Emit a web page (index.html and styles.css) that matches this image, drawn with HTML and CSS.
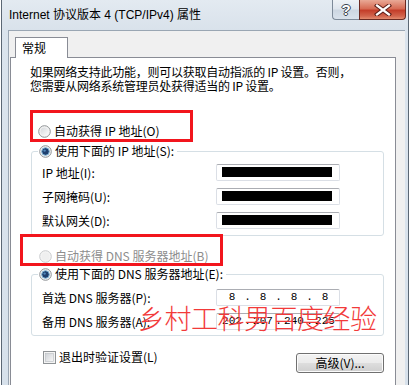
FILE: index.html
```html
<!DOCTYPE html>
<html lang="zh-CN">
<head>
<meta charset="utf-8">
<title>Internet 协议版本 4 (TCP/IPv4) 属性</title>
<link rel="stylesheet" href="styles.css">
</head>
<body>
<div class="window">
  <div class="titlebar">
    <span class="title">Internet 协议版本 4 (TCP/IPv4) 属性</span>
    <div class="caption-btns">
      <span class="cbtn help">?</span>
      <span class="cbtn close">
        <svg width="20" height="12" viewBox="0 0 20 12"><path d="M4 1.5 L16 10.5 M16 1.5 L4 10.5" stroke="#5a1d17" stroke-width="4.2" stroke-linecap="square"/><path d="M4 1.5 L16 10.5 M16 1.5 L4 10.5" stroke="#ffffff" stroke-width="2.2" stroke-linecap="square"/></svg>
      </span>
    </div>
  </div>
  <div class="client">
    <div class="tabs"><span class="tab">常规</span></div>
    <div class="panel">
      <p class="desc">如果网络支持此功能，则可以获取自动指派的 IP 设置。否则，<br>您需要从网络系统管理员处获得适当的 IP 设置。</p>
      <div class="mark mark1">
        <div class="opt">
          <svg class="radio" width="13" height="13" viewBox="0 0 13 13"><defs><linearGradient id="ro" x1="0" y1="0" x2="1" y2="1"><stop offset="0" stop-color="#d5d8dc"/><stop offset="1" stop-color="#fbfbfb"/></linearGradient></defs><circle cx="6.5" cy="6.5" r="5.8" fill="#f4f4f4" stroke="#8f9396"/><circle cx="6.5" cy="6.5" r="4" fill="url(#ro)"/></svg>
          <span>自动获得 IP 地址(O)</span>
        </div>
      </div>
      <div class="group g1">
        <div class="legend opt">
          <svg class="radio" width="13" height="13" viewBox="0 0 13 13"><circle cx="6.5" cy="6.5" r="5.8" fill="#f4f4f4" stroke="#8f9396"/><circle cx="6.5" cy="6.5" r="3.8" fill="#1f3f6e" stroke="#7cb3d6" stroke-width="1"/><circle cx="5.6" cy="5.6" r="1.2" fill="#4f86b8"/></svg>
          <span>使用下面的 IP 地址(S):</span>
        </div>
        <div class="field"><span class="lbl">IP 地址(I):</span><span class="input"><i class="redact"></i></span></div>
        <div class="field"><span class="lbl">子网掩码(U):</span><span class="input"><i class="redact"></i></span></div>
        <div class="field"><span class="lbl">默认网关(D):</span><span class="input"><i class="redact"></i></span></div>
      </div>
      <div class="opt dns-auto disabled">
        <svg class="radio" width="13" height="13" viewBox="0 0 13 13"><circle cx="6.5" cy="6.5" r="5.8" fill="#f4f4f4" stroke="#c9cbcd"/><circle cx="6.5" cy="6.5" r="4" fill="#efefef"/></svg>
        <span>自动获得 DNS 服务器地址(B)</span>
      </div>
      <div class="group g2">
        <div class="legend opt">
          <svg class="radio" width="13" height="13" viewBox="0 0 13 13"><circle cx="6.5" cy="6.5" r="5.8" fill="#f4f4f4" stroke="#8f9396"/><circle cx="6.5" cy="6.5" r="3.8" fill="#1f3f6e" stroke="#7cb3d6" stroke-width="1"/><circle cx="5.6" cy="5.6" r="1.2" fill="#4f86b8"/></svg>
          <span>使用下面的 DNS 服务器地址(E):</span>
        </div>
        <div class="field"><span class="lbl">首选 DNS 服务器(P):</span><span class="input ip"><span class="oct">8</span><span class="dot">.</span><span class="oct">8</span><span class="dot">.</span><span class="oct">8</span><span class="dot">.</span><span class="oct">8</span></span></div>
        <div class="field"><span class="lbl">备用 DNS 服务器(A):</span><span class="input ip"><span class="oct">202</span><span class="dot">.</span><span class="oct">207</span><span class="dot">.</span><span class="oct">240</span><span class="dot">.</span><span class="oct">225</span></span></div>
      </div>
      <div class="bottom-row">
        <div class="opt check-opt">
          <svg class="check" width="13" height="13" viewBox="0 0 13 13"><defs><linearGradient id="cb" x1="0" y1="0" x2="1" y2="1"><stop offset="0" stop-color="#cfd3d8"/><stop offset="1" stop-color="#f7f7f7"/></linearGradient></defs><rect x="0.5" y="0.5" width="12" height="12" fill="#f4f4f4" stroke="#8f9396"/><rect x="2.5" y="2.5" width="8" height="8" fill="url(#cb)" stroke="#b8bcc1" stroke-width="0.6"/></svg>
          <span>退出时验证设置(L)</span>
        </div>
        <span class="btn">高级(V)...</span>
      </div>
      <div class="mark mark2"></div>
    </div>
  </div>
  <div class="watermark">乡村工科男百度经验</div>
</div>
</body>
</html>
```

FILE: styles.css
```css
html, body {
  margin: 0;
  padding: 0;
  background: #ffffff;
}
body {
  width: 413px;
  height: 385px;
  overflow: hidden;
  font-family: "Noto Sans CJK SC", "Liberation Sans", sans-serif;
  font-size: 12px;
  color: #000;
}
.window {
  position: relative;
  margin-left: 1px;
  width: 408px;
  height: 385px;
  box-sizing: border-box;
  border-left: 1px solid #5b6774;
  border-right: 1px solid #5b6774;
  background: linear-gradient(to bottom, #dbe4ed 0%, #d7e1eb 100%);
  display: flex;
  flex-direction: column;
}
.titlebar {
  height: 30px;
  flex: none;
  display: flex;
  align-items: flex-start;
  padding-left: 7px;
  background: linear-gradient(to bottom, #e3eaf1 0%, #d9e2eb 100%);
}
.title {
  font-family: "Liberation Sans", "Noto Sans CJK SC", sans-serif;
  font-size: 12px;
  line-height: 30px;
  color: #000;
}
.caption-btns {
  margin-left: auto;
  margin-right: 2px;
  display: flex;
}
.cbtn {
  height: 20px;
  box-sizing: border-box;
  display: flex;
  align-items: center;
  justify-content: center;
}
.help {
  width: 27px;
  border: 1px solid #7d8a99;
  border-top: none;
  border-right: none;
  border-radius: 0 0 0 4px;
  background: linear-gradient(to bottom, #eef2f6 0%, #dfe6ee 45%, #cdd7e2 55%, #d9e2ec 100%);
  font-family: "Liberation Sans", sans-serif;
  font-weight: bold;
  font-size: 15px;
  color: #fff;
  text-shadow: 0 0 1px #3c4650, 1px 0 0 #3c4650, -1px 0 0 #3c4650, 0 1px 0 #3c4650, 0 -1px 0 #3c4650;
}
.close {
  width: 47px;
  border: 1px solid #6b2a22;
  border-top: none;
  border-radius: 0 0 4px 0;
  background: linear-gradient(to bottom, #e9a996 0%, #d76c55 45%, #c43e2a 55%, #d2654d 85%, #e48c70 100%);
}
.client {
  flex: 1;
  margin: 0 3px 0 6px;
  border-top: 1px solid #9aa6b3;
  border-left: 1px solid #9aa6b3;
  background: #f0f0f0;
  padding-top: 6px;
}
.tabs {
  display: flex;
  padding-left: 6px;
}
.tab {
  position: relative;
  z-index: 1;
  width: 53px;
  height: 21px;
  box-sizing: border-box;
  border: 1px solid #898c95;
  border-bottom: none;
  background: #fff;
  margin-bottom: -1px;
  padding-left: 6px;
  line-height: 19px;
}
.panel {
  position: relative;
  margin-left: 1px;
  width: 386px;
  height: 340px;
  box-sizing: border-box;
  border: 1px solid #898c95;
  border-bottom: none;
  background: #fff;
}
.desc {
  margin: 7px 0 0 19px;
  line-height: 14px;
  letter-spacing: -0.25px;
  white-space: nowrap;
}
.opt {
  display: flex;
  align-items: center;
  height: 14px;
  line-height: 14px;
  white-space: nowrap;
}
.radio, .check {
  flex: none;
  margin-right: 3px;
}
.mark {
  box-sizing: border-box;
  border: 3px solid #f2151d;
}
.mark1 {
  margin: 17px 0 0 19px;
  width: 163px;
  height: 32px;
  padding: 11px 0 0 5px;
}
.mark2 {
  position: absolute;
  left: 9px;
  top: 176px;
  width: 203px;
  height: 32px;
}
.group {
  margin-left: 20px;
  width: 353px;
  box-sizing: border-box;
  border: 1px solid #d5dfe5;
  border-radius: 3px;
}
.g1 {
  margin-top: 9px;
  height: 85px;
}
.g2 {
  margin-top: 11px;
  height: 62px;
}
.legend {
  width: max-content;
  margin: -8px 0 0 6px;
  padding: 0 3px 0 1px;
  background: #fff;
}
.g1 .legend + .field {
  margin-top: 2px;
}
.g2 .legend + .field {
  margin-top: 4px;
}
.field {
  display: flex;
  align-items: center;
  height: 24px;
}
.lbl {
  width: 174px;
  padding-left: 10px;
  white-space: nowrap;
}
.input {
  width: 124px;
  height: 17px;
  box-sizing: border-box;
  border: 1px solid #dbdfe6;
  border-top-color: #abadb3;
  border-radius: 2px;
  display: flex;
  align-items: center;
  background: #fff;
}
.redact {
  display: block;
  height: 10px;
  margin: 0 7px 0 5px;
  flex: 1;
  background: #000;
}
.ip {
  padding-left: 3px;
  font-family: "Liberation Mono", monospace;
  font-size: 11px;
  line-height: 15px;
}
.oct {
  width: 24px;
  text-align: center;
}
.dot {
  width: 7px;
  text-align: center;
}
.dns-auto {
  margin: 13px 0 0 28px;
}
.disabled {
  color: #8d8d8d;
}
.bottom-row {
  display: flex;
  align-items: flex-start;
  margin-top: 14px;
}
.check-opt {
  margin-left: 32px;
}
.btn {
  margin: 3px 11px 0 auto;
  width: 88px;
  height: 20px;
  box-sizing: border-box;
  border: 1px solid #707070;
  border-radius: 3px;
  background: linear-gradient(to bottom, #f3f3f3 0%, #ebebeb 48%, #dddddd 52%, #cfcfcf 100%);
  box-shadow: inset 0 0 0 1px #fbfbfb;
  display: flex;
  align-items: center;
  justify-content: center;
  line-height: 18px;
}
.watermark {
  position: absolute;
  left: 136px;
  top: 302px;
  font-size: 27px;
  line-height: 32px;
  font-weight: 300;
  color: #f23a3a;
  letter-spacing: -0.5px;
  white-space: nowrap;
  pointer-events: none;
}
```
